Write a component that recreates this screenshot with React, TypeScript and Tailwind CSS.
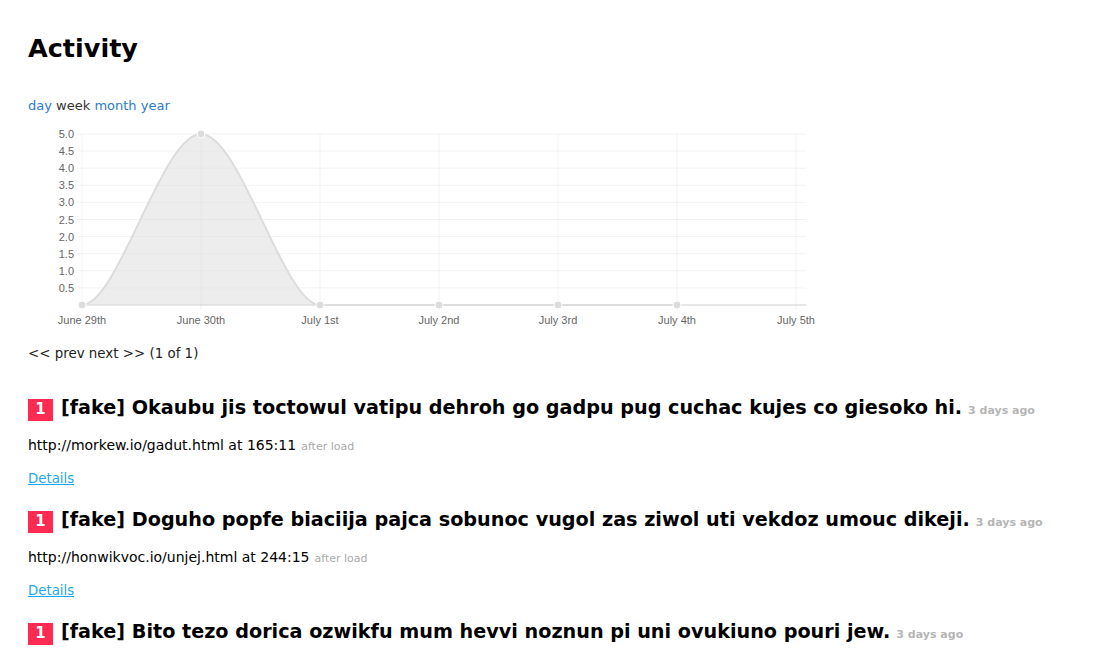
import React from "react";

interface Item {
  title: string;
  url: string;
  at: string;
}

const items: Item[] = [
  {
    title: "[fake] Okaubu jis toctowul vatipu dehroh go gadpu pug cuchac kujes co giesoko hi.",
    url: "http://morkew.io/gadut.html",
    at: "165:11",
  },
  {
    title: "[fake] Doguho popfe biaciija pajca sobunoc vugol zas ziwol uti vekdoz umouc dikeji.",
    url: "http://honwikvoc.io/unjej.html",
    at: "244:15",
  },
  {
    title: "[fake] Bito tezo dorica ozwikfu mum hevvi noznun pi uni ovukiuno pouri jew.",
    url: "http://lobatfa.io/kuhoz.html",
    at: "98:2",
  },
];

const xs = [82, 201, 320, 439, 558, 677, 796];
const xLabels = ["June 29th", "June 30th", "July 1st", "July 2nd", "July 3rd", "July 4th", "July 5th"];
const values = [0, 5, 0, 0, 0, 0];
const top = 134;
const bottom = 305;
const yOf = (v: number) => bottom - (v / 5) * (bottom - top);

function ActivityChart() {
  const grid = Array.from({ length: 11 }, (_, i) => top + (i * (bottom - top)) / 10);
  const labels = ["5.0", "4.5", "4.0", "3.5", "3.0", "2.5", "2.0", "1.5", "1.0", "0.5"];
  const line = `M82,305 C118,305 162,134 201,134 C240,134 284,305 320,305 L677,305`;
  const area = `M82,305 C118,305 162,134 201,134 C240,134 284,305 320,305 Z`;

  return (
    <svg width={800} height={210} viewBox="28 120 800 210" className="block">
      {grid.map((y, i) => (
        <line key={i} x1={77} x2={806} y1={y} y2={y} stroke="rgba(0,0,0,0.05)" strokeWidth={1} />
      ))}
      {xs.map((x) => (
        <line key={x} x1={x} x2={x} y1={top} y2={310} stroke="rgba(0,0,0,0.05)" strokeWidth={1} />
      ))}
      <line x1={82} x2={806} y1={305} y2={305} stroke="rgba(0,0,0,0.07)" strokeWidth={2} />
      {labels.map((l, i) => (
        <text
          key={l}
          x={74}
          y={grid[i] + 4}
          textAnchor="end"
          fontSize={11}
          fill="#666"
          fontFamily="'Liberation Sans', Arial, sans-serif"
        >
          {l}
        </text>
      ))}
      {xLabels.map((l, i) => (
        <text
          key={l}
          x={xs[i]}
          y={324}
          textAnchor="middle"
          fontSize={11}
          fill="#666"
          fontFamily="'Liberation Sans', Arial, sans-serif"
        >
          {l}
        </text>
      ))}
      <path d={area} fill="rgba(220,220,220,0.5)" />
      <path d={line} fill="none" stroke="#dcdcdc" strokeWidth={2} />
      {values.map((v, i) => (
        <circle key={i} cx={xs[i]} cy={yOf(v)} r={4} fill="#dcdcdc" stroke="#fff" strokeWidth={1} />
      ))}
    </svg>
  );
}

export default function App() {
  return (
    <div className="min-h-screen bg-white pl-[28px] pt-[33px] text-black font-['DejaVu_Sans',Verdana,sans-serif]">
      <h1 className="text-[25.5px] leading-[31px] font-bold">Activity</h1>

      <div className="mt-[34px] text-[13px] leading-[16px] text-[#333]">
        <a className="text-[#2b7bc6]">day</a> <span>week</span>{" "}
        <a className="text-[#2b7bc6]">month</a> <a className="text-[#2b7bc6]">year</a>
      </div>

      <div className="mt-[6px]">
        <ActivityChart />
      </div>

      <div className="mt-[15px] text-[13.4px] leading-[18px] text-[#222]">
        &lt;&lt; prev next &gt;&gt; (1 of 1)
      </div>

      {items.map((item, i) => (
        <div key={i} className={i === 0 ? "mt-[32px]" : "mt-[19px]"}>
          <div className="flex items-center gap-[8px]">
            <span className="flex h-[22px] w-[25px] shrink-0 items-center justify-center bg-[#fd2a52] text-[15px] font-bold text-white">
              1
            </span>
            <span className="whitespace-nowrap text-[19.2px] leading-[26px] font-bold">
              {item.title}
              <span className="ml-[6px] text-[11px] font-bold text-[#b5b5b5]">3 days ago</span>
            </span>
          </div>
          <div className="mt-[11px] text-[14px] leading-[20px]">
            {item.url} at {item.at}
            <span className="ml-[5px] text-[11px] text-[#aaa]">after load</span>
          </div>
          <div className="mt-[13px] text-[13.3px] leading-[18px]">
            <a className="text-[#1ea7f0] underline">Details</a>
          </div>
        </div>
      ))}
    </div>
  );
}
